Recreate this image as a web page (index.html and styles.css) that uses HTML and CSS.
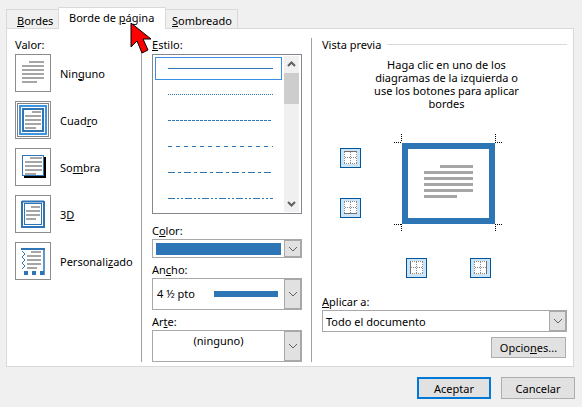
FILE: index.html
```html
<!DOCTYPE html>
<html lang="es">
<head>
<meta charset="utf-8">
<title>Bordes y sombreado</title>
<link rel="stylesheet" href="styles.css">
</head>
<body>
<svg class="defs" width="0" height="0" aria-hidden="true">
  <defs>
    <g id="doc">
      <path d="M14 8h15M7 12h22M7 16h22M7 20h22M7 24h22M7 28h15" stroke="#a6a6a6" stroke-width="2" fill="none"/>
    </g>
    <g id="grid">
      <rect x="3" y="3" width="13" height="13" fill="#fff"/>
      <path d="M3 3.500h13M3 15.500h13M3.500 4v11M15.500 4v11M9.500 4v11M4 9.500h11" fill="none" stroke="#8a8a8a" stroke-dasharray="1 1"/>
    </g>
  </defs>
</svg>
<div class="dialog">
  <div class="tabs">
    <div class="tab"><u>B</u>ordes</div>
    <div class="tab active">Borde de <u>p</u>ágina</div>
    <div class="tab"><u>S</u>ombreado</div>
  </div>
  <div class="panel">
    <section class="col col-value">
      <div class="label">Valor:</div>
      <div class="values">
        <div class="value">
          <svg class="value-icon" viewBox="0 0 36 38"><rect x=".5" y=".5" width="35" height="37" fill="#fff" stroke="#8c8c8c"/><use href="#doc"/></svg>
          <span>Nin<u>g</u>uno</span>
        </div>
        <div class="value">
          <svg class="value-icon" viewBox="0 0 36 38"><rect x=".5" y=".5" width="35" height="37" fill="#fff" stroke="#8c8c8c"/><rect x="2.500" y="2.500" width="31" height="33" fill="none" stroke="#000" stroke-dasharray="1 1"/><rect x="5" y="5" width="26" height="28" fill="none" stroke="#3f94e0" stroke-width="2"/><rect x="8" y="8" width="20" height="22" fill="#fff" stroke="#2e75b6" stroke-width="2"/><path d="M17 11h9M10 15h16M10 19h16M10 23h16M10 27h11" stroke="#a6a6a6" stroke-width="2" fill="none"/></svg>
          <span>Cuad<u>r</u>o</span>
        </div>
        <div class="value">
          <svg class="value-icon" viewBox="0 0 36 38"><rect x=".5" y=".5" width="35" height="37" fill="#fff" stroke="#8c8c8c"/><path d="M9 29h21V9" fill="none" stroke="#000" stroke-width="2"/><rect x="7.500" y="7.500" width="21" height="20" fill="#fff" stroke="#2e75b6"/><path d="M15 10h12M10 14h17M10 18h17M10 22h17M10 26h11" stroke="#a6a6a6" stroke-width="2" fill="none"/></svg>
          <span>So<u>m</u>bra</span>
        </div>
        <div class="value">
          <svg class="value-icon" viewBox="0 0 36 38"><rect x=".5" y=".5" width="35" height="37" fill="#fff" stroke="#8c8c8c"/><path d="M7 6.500h22M7 6v27M29 6v27M6 32h24" fill="none" stroke="#2e75b6" stroke-width="2"/><rect x="9.500" y="8.500" width="17" height="21" fill="none" stroke="#2e75b6"/><path d="M16 12h9M11 16h14M11 20h14M11 24h10" stroke="#a6a6a6" stroke-width="2" fill="none"/></svg>
          <span>3<u>D</u></span>
        </div>
        <div class="value">
          <svg class="value-icon" viewBox="0 0 36 38"><rect x=".5" y=".5" width="35" height="37" fill="#fff" stroke="#8c8c8c"/><path d="M6 7h24" stroke="#2e75b6" stroke-width="2"/><path d="M7 9l3 3-3 3 3 3-3 3 3 3-3 3" fill="none" stroke="#2e75b6"/><path d="M29 7v26" stroke="#2e75b6" stroke-width="1.500"/><rect x="9" y="29" width="4" height="4" fill="#2e75b6"/><rect x="17" y="29" width="4" height="4" fill="#2e75b6"/><rect x="25" y="29" width="4" height="4" fill="#2e75b6"/><path d="M16 10h10M12 14h14M12 18h14M12 22h14M12 26h10" stroke="#a6a6a6" stroke-width="2" fill="none"/></svg>
          <span>Personali<u>z</u>ado</span>
        </div>
      </div>
    </section>
    <section class="col col-style">
      <div class="label"><u>E</u>stilo:</div>
      <div class="listbox">
        <div class="list-lines">
          <div class="list-sel"></div>
          <svg class="lines" viewBox="0 0 128 156" width="128" height="156">
            <g stroke="#2e75b6" fill="none">
              <path d="M13 12.500h105"/>
              <path d="M13 38.500h105" stroke-dasharray="1 1"/>
              <path d="M13 64.500h104" stroke-dasharray="3 1"/>
              <path d="M13 90.500h105" stroke-dasharray="4 4"/>
              <path d="M13 116.500h103" stroke-dasharray="7 3 3 3"/>
              <path d="M13 142.500h105" stroke-dasharray="7 2 2 2 2 2"/>
            </g>
          </svg>
        </div>
        <div class="scrollbar">
          <svg class="scroll-arrow" viewBox="0 0 15 17"><path d="M4 10l3.500-3.500L11 10" fill="none" stroke="#606060" stroke-width="2"/></svg>
          <div class="scroll-track"><div class="scroll-thumb"></div></div>
          <svg class="scroll-arrow" viewBox="0 0 15 17"><path d="M4 7l3.500 3.500L11 7" fill="none" stroke="#606060" stroke-width="2"/></svg>
        </div>
      </div>
      <div class="label field-label">C<u>o</u>lor:</div>
      <div class="combo combo-color">
        <div class="combo-body"><div class="swatch"></div></div>
        <div class="combo-btn"><svg viewBox="0 0 10 6" width="10" height="6"><path d="M1 1l4 4 4-4" fill="none" stroke="#606060"/></svg></div>
      </div>
      <div class="label field-label">An<u>c</u>ho:</div>
      <div class="combo combo-tall">
        <div class="combo-body width-body"><span>4 ½ pto</span><div class="width-bar"></div></div>
        <div class="combo-btn"><svg viewBox="0 0 10 6" width="10" height="6"><path d="M1 1l4 4 4-4" fill="none" stroke="#606060"/></svg></div>
      </div>
      <div class="label field-label">Ar<u>t</u>e:</div>
      <div class="combo combo-tall">
        <div class="combo-body art-body">(ninguno)</div>
        <div class="combo-btn"><svg viewBox="0 0 10 6" width="10" height="6"><path d="M1 1l4 4 4-4" fill="none" stroke="#606060"/></svg></div>
      </div>
    </section>
    <section class="col col-preview">
      <div class="legend"><span class="label">Vista previa</span><span class="legend-rule"></span></div>
      <p class="hint">Haga clic en uno de los<br>diagramas de la izquierda o<br>use los botones para aplicar<br>bordes</p>
      <div class="preview">
        <div class="side-buttons">
          <svg class="edge-btn" viewBox="0 0 21 20"><rect x=".5" y=".5" width="20" height="19" fill="#cce4f7" stroke="#005499"/><use href="#grid" x="1"/><path d="M4 3.500h13" stroke="#707070"/></svg>
          <svg class="edge-btn" viewBox="0 0 21 20"><rect x=".5" y=".5" width="20" height="19" fill="#cce4f7" stroke="#005499"/><use href="#grid" x="1"/><path d="M4 15.500h13" stroke="#707070"/></svg>
        </div>
        <div class="preview-main">
          <svg class="page" viewBox="0 0 111 101" width="111" height="101">
            <path d="M1 9.500h8M8.500 1v8M102 9.500h8M102.500 1v8M1 91.500h8M8.500 91v8M102 91.500h8M102.500 91v8" stroke="#000" stroke-dasharray="1 1" fill="none" stroke-width="1"/>
            <rect x="12" y="13" width="87" height="75" fill="#fff" stroke="#2e75b6" stroke-width="6"/>
            <path d="M47 33.500h33M31 39.500h49M31 45.500h49M31 51.500h49M31 57.500h49M31 63.500h33" stroke="#a6a6a6" stroke-width="3"/>
          </svg>
          <div class="bottom-buttons">
            <svg class="edge-btn" viewBox="0 0 21 20"><rect x=".5" y=".5" width="20" height="19" fill="#cce4f7" stroke="#005499"/><use href="#grid" x="1"/><path d="M4.500 3v13" stroke="#707070"/></svg>
            <svg class="edge-btn" viewBox="0 0 21 20"><rect x=".5" y=".5" width="20" height="19" fill="#cce4f7" stroke="#005499"/><use href="#grid" x="1"/><path d="M16.500 3v13" stroke="#707070"/></svg>
          </div>
        </div>
      </div>
      <div class="label apply-label"><u>A</u>plicar a:</div>
      <div class="combo combo-apply">
        <div class="combo-body apply-body">Todo el documento</div>
        <div class="combo-btn"><svg viewBox="0 0 10 6" width="10" height="6"><path d="M1 1l4 4 4-4" fill="none" stroke="#606060"/></svg></div>
      </div>
      <div class="options-row"><button class="btn options">Opcio<u>n</u>es...</button></div>
    </section>
  </div>
  <div class="footer">
    <button class="btn primary">Aceptar</button>
    <button class="btn">Cancelar</button>
  </div>
  <svg class="cursor" viewBox="0 0 22 32" width="22" height="32"><path d="M1 1v24l6-6 5 12 6-3-5-11h8z" fill="#f00" stroke="#000"/></svg>
</div>
</body>
</html>
```
FILE: styles.css
```css
* { box-sizing: border-box; }
html, body { margin: 0; padding: 0; }
body {
  width: 582px;
  height: 407px;
  overflow: hidden;
  background: #f0f0f0;
  font-family: "Noto Sans", "Open Sans", sans-serif;
  font-size: 11px;
  line-height: 13px;
  color: #000;
}
.defs { position: absolute; }
.dialog { position: relative; width: 582px; height: 407px; display: flex; flex-direction: column; }
.tabs { display: flex; align-items: flex-end; height: 29px; padding: 7px 0 0 6px; }
.tab {
  height: 20px;
  padding: 4px 0 0 10px;
  background: #f0f0f0;
  border: 1px solid #d9d9d9;
  border-bottom: 0;
  margin-right: -1px;
}
.tab:nth-child(1) { width: 53px; }
.tab:nth-child(2) { width: 108px; height: 22px; background: #fff; position: relative; z-index: 1; padding-top: 3px; }
.tab:nth-child(3) { width: 73px; padding-left: 6px; }
.panel {
  margin: -1px 0 0 6px;
  width: 568px;
  height: 339px;
  background: #fff;
  border: 1px solid #d9d9d9;
  display: grid;
  grid-template-columns: 134px 170px 1fr;
  padding: 9px 0 5px;
}
.col { padding-top: 0; display: flex; flex-direction: column; min-width: 0; }
.col-value { padding-left: 8px; }
.col-style { border-left: 1px solid #a0a0a0; padding-left: 10px; padding-right: 9px; }
.col-preview { border-left: 1px solid #a0a0a0; padding: 0 6px 0 10px; }
.label { display: block; }
.values { display: flex; flex-direction: column; gap: 9px; margin-top: 3px; }
.value { display: flex; align-items: center; gap: 9px; height: 38px; }
.value-icon { width: 36px; height: 38px; flex: none; display: block; }
.listbox {
  margin-top: 3px;
  height: 160px;
  border: 1px solid #828790;
  display: flex;
  background: #fff;
}
.list-lines { position: relative; flex: 1; padding: 1px 0 0 2px; }
.list-sel { position: absolute; left: 2px; top: 2px; width: 127px; height: 23px; border: 1px solid #3b8fe0; }
.lines { display: block; }
.scrollbar { width: 15px; margin: 1px 2px 1px 0; display: flex; flex-direction: column; background: #f0f0f0; }
.scroll-arrow { width: 15px; height: 17px; display: block; flex: none; }
.scroll-track { flex: 1; }
.scroll-thumb { height: 31px; background: #cdcdcd; }
.field-label { margin-top: 5px; }
.listbox + .field-label { margin-top: 10px; }
.combo { margin-top: 2px; display: flex; border: 1px solid #a8a8a8; background: #fff; }
.combo-body { flex: 1; min-width: 0; }
.combo-btn { width: 17px; flex: none; background: #e1e1e1; border: 1px solid #a8a8a8; border-width: 0 0 0 1px; display: flex; align-items: center; justify-content: center; box-shadow: inset -1px 0 #a8a8a8, inset 0 1px #a8a8a8, inset 0 -1px #a8a8a8; }
.combo-color { height: 19px; }
.swatch { height: 12px; margin: 3px 3px 0 3px; background: #2e75b6; }
.combo-tall { height: 32px; }
.width-body { display: flex; align-items: center; padding: 0 6px 2px 4px; justify-content: space-between; }
.width-bar { width: 64px; height: 6px; background: #2e75b6; margin-top: 2px; }
.art-body { text-align: center; padding-top: 3px; }
.legend { display: flex; align-items: center; gap: 6px; }
.legend-rule { flex: 1; height: 1px; background: #d9d9d9; }
.hint { margin: 7px 0 0; text-align: center; padding-left: 4px; }
.preview { display: flex; margin: 23px 0 0 18px; }
.side-buttons { display: flex; flex-direction: column; gap: 30px; padding-top: 15px; margin-right: 32px; }
.edge-btn { width: 21px; height: 20px; display: block; flex: none; }
.page { display: block; }
.bottom-buttons { display: flex; gap: 43px; margin: 24px 0 0 13px; }
.apply-label { margin-top: 17px; }
.combo-apply { height: 22px; }
.apply-body { padding: 4px 0 0 3px; }
.options-row { display: flex; justify-content: flex-end; margin-top: 5px; padding-right: 1px; }
.btn {
  font: inherit;
  color: #000;
  height: 22px;
  width: 74px;
  padding: 0;
  background: #e1e1e1;
  border: 1px solid #adadad;
}
.options { width: 75px; height: 21px; }
.primary { border: 2px solid #0078d7; }
.footer { display: flex; justify-content: flex-end; gap: 10px; padding: 10px 7px 0 0; }
.cursor { position: absolute; left: 130px; top: 22px; z-index: 2; }
```
